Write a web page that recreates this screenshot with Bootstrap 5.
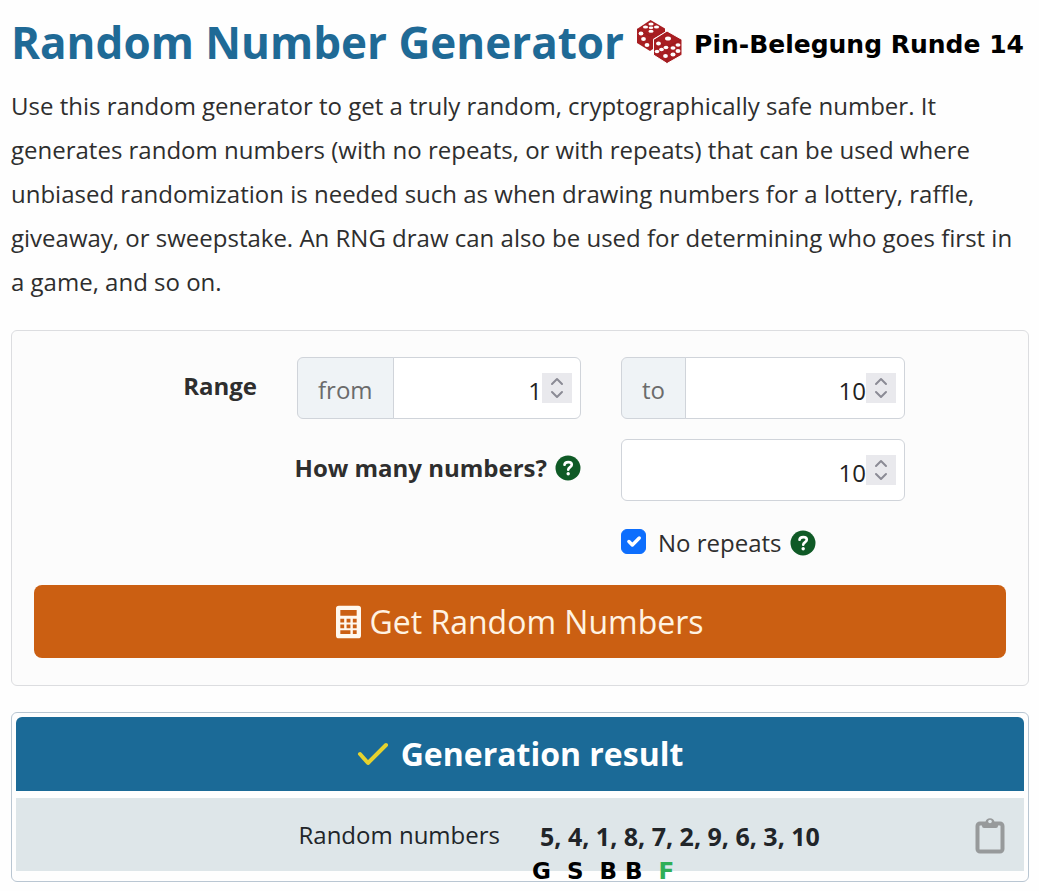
<!DOCTYPE html>
<html lang="en">
<head>
<meta charset="utf-8">
<meta name="viewport" content="width=device-width, initial-scale=1">
<title>Random Number Generator</title>
<link href="https://cdn.jsdelivr.net/npm/bootstrap@5.3.0/dist/css/bootstrap.min.css" rel="stylesheet">
<style>
  body { font-family: "Open Sans", "Noto Sans", sans-serif; font-size: 24px; line-height: 36px; color: #2e2e2e; background: #fefefe; }
  .page { padding: 9px 10px 8px 11px; }
  .title-bar { gap: 12px; }
  .title { font-size: 44px; line-height: 66px; font-weight: 700; color: #1f6a96; }
  .dice { width: 46px; height: 44px; }
  .note { font-family: "DejaVu Sans", sans-serif; font-weight: 700; color: #000; }
  .round-note { font-size: 25px; line-height: 36px; padding-top: 6px; }
  .intro { line-height: 44px; margin-bottom: 26px; padding-top: 9px; }
  .panel { background: #fcfcfc; border: 1px solid #dcdde0; border-radius: 6px; padding: 26px 22px 27px; }
  .fields { --bs-gutter-x: 40px; --bs-gutter-y: 20px; }
  .field-label { font-weight: 700; line-height: 58px; }
  .input-group-text, .form-control { font-size: 24px; line-height: 36px; height: 62px; border-color: #d0d4da; border-radius: 6px; }
  .input-group-text { background: #eff3f6; color: #6b6b6b; padding: 4px 20px 0; }
  .form-control { text-align: right; padding: 4px 8px 0 12px; color: #222; }
  .form-control::-webkit-inner-spin-button {
    -webkit-appearance: none; appearance: none; opacity: 1; width: 30px; height: 30px; margin: 0 0 4px;
    background: #e9e9ed url("data:image/svg+xml,%3Csvg xmlns='http://www.w3.org/2000/svg' viewBox='0 0 30 30' fill='none' stroke='%238b8b95' stroke-width='2' stroke-linecap='round' stroke-linejoin='round'%3E%3Cpath d='M10 11l5-5 5 5M10 19l5 5 5-5'/%3E%3C/svg%3E") center / 30px 30px;
  }
  .help { width: 26px; height: 26px; border: 0; padding: 0; background: none; line-height: 0; }
  .form-check-input { width: 25px; height: 25px; border-radius: 6px; margin: 0 0 4px; float: none; }
  .repeat-line { padding-top: 4px; margin-bottom: 24px; }
  .btn-generate { background: #cb5f12; color: #fff3e2; font-size: 32px; line-height: 48px; height: 73px; border: 0; border-radius: 8px; }
  .btn-generate:hover { background: #b4540f; color: #fff; }
  .result-box { margin-top: 26px; border: 1px solid #b9c6d2; border-radius: 6px; padding: 4px 4px 10px; }
  .result-head { background: #1b6a97; color: #fff; font-size: 32px; font-weight: 700; line-height: 74px; border-radius: 6px 6px 0 0; margin-bottom: 7px; }
  .result-row { background: #dee6e9; height: 73px; --bs-gutter-x: 40px; color: #212529; }
  .drawn { font-size: 25px; font-weight: 700; padding-top: 2px; }
  .copy-btn { border: 0; padding: 0; background: none; width: 30px; height: 38px; line-height: 0; right: 19px; top: 19px; }
  .pin-notes { left: calc(50% + 12px); top: 58px; font-size: 23px; line-height: 30px; gap: 16px; }
  .pin-free { color: #2fae57; }
</style>
</head>
<body>
<main class="page container-fluid">
  <header class="title-bar d-flex align-items-center">
    <h1 class="title mb-0 text-nowrap">Random Number Generator</h1>
    <svg class="dice flex-shrink-0" viewBox="0 0 46 44" aria-hidden="true">
      <path d="M14.500 0 29 8.500V12L17 19V29L14 31 1 23V9z" fill="#a81e22"/>
      <path d="M31 11 46 19.500V35L31 43.500 17.500 35V19.500z" fill="#a81e22" stroke="#fff" stroke-width="1"/>
      <path d="M1 9l13 7 4-2M18 20l13 7 14-7M31 27v16" fill="none" stroke="#8d171b" stroke-width=".6"/>
      <g fill="#fff">
        <ellipse cx="15" cy="4" rx="2.600" ry="1.500"/><ellipse cx="9.500" cy="7" rx="2.600" ry="1.500"/><ellipse cx="15" cy="7.700" rx="2.300" ry="1.300"/><ellipse cx="20.500" cy="7" rx="2.600" ry="1.500"/><ellipse cx="15" cy="11.300" rx="2.600" ry="1.500"/>
        <ellipse cx="5" cy="13.500" rx="2.400" ry="2"/><ellipse cx="7.500" cy="19" rx="2.400" ry="2"/><ellipse cx="11" cy="25" rx="2.400" ry="2"/>
        <ellipse cx="32" cy="18.500" rx="3" ry="2"/>
        <ellipse cx="22.500" cy="23.500" rx="2.400" ry="2"/><ellipse cx="30" cy="27.500" rx="2.400" ry="1.800"/><ellipse cx="25.500" cy="29.500" rx="2.400" ry="1.800"/><ellipse cx="21" cy="31.500" rx="2.300" ry="1.800"/><ellipse cx="29.500" cy="36" rx="2.400" ry="2"/>
        <ellipse cx="37" cy="28" rx="2.500" ry="1.800"/><ellipse cx="42" cy="25" rx="2.500" ry="1.800"/><ellipse cx="37" cy="34.500" rx="2.500" ry="2"/><ellipse cx="42" cy="31" rx="2.500" ry="2"/>
      </g>
    </svg>
    <span class="note round-note text-nowrap">Pin-Belegung Runde 14</span>
  </header>

  <p class="intro">Use this random generator to get a truly random, cryptographically safe number. It generates random numbers (with no repeats, or with repeats) that can be used where unbiased randomization is needed such as when drawing numbers for a lottery, raffle, giveaway, or sweepstake. An RNG draw can also be used for determining who goes first in a game, and so on.</p>

  <form class="panel">
    <div class="row mx-0 mt-0 fields">
      <label class="col-3 mt-0 text-end field-label" for="from">Range</label>
      <div class="col-4 mt-0">
        <div class="input-group flex-nowrap">
          <label class="input-group-text" for="from">from</label>
          <input class="form-control" type="number" id="from" value="1">
        </div>
      </div>
      <div class="col-4 mt-0">
        <div class="input-group flex-nowrap">
          <label class="input-group-text" for="to">to</label>
          <input class="form-control" type="number" id="to" value="10">
        </div>
      </div>
      <div class="col-7 d-flex justify-content-end align-items-start">
        <label class="field-label text-nowrap" for="count">How many numbers?</label>
        <button class="help ms-2 mt-3" type="button" aria-label="Help on how many numbers"><svg width="26" height="26" viewBox="0 0 26 26"><circle cx="13" cy="13" r="12.500" fill="#0f5a26"/><path d="M9.500 9.800c.3-3.600 7.300-3.600 7.300 0 0 2.300-3.600 2.300-3.600 5" fill="none" stroke="#fff" stroke-width="2.600" stroke-linecap="round"/><circle cx="13.200" cy="18.800" r="1.700" fill="#fff"/></svg></button>
      </div>
      <div class="col-4"><input class="form-control" type="number" id="count" value="10"></div>
      <div class="col-5 offset-7 d-flex align-items-center repeat-line">
        <input class="form-check-input" type="checkbox" id="norepeat" checked>
        <label class="text-nowrap mx-2 ps-1" for="norepeat">No repeats</label>
        <button class="help" type="button" aria-label="Help on no repeats"><svg width="26" height="26" viewBox="0 0 26 26"><circle cx="13" cy="13" r="12.500" fill="#0f5a26"/><path d="M9.500 9.800c.3-3.600 7.300-3.600 7.300 0 0 2.300-3.600 2.300-3.600 5" fill="none" stroke="#fff" stroke-width="2.600" stroke-linecap="round"/><circle cx="13.200" cy="18.800" r="1.700" fill="#fff"/></svg></button>
      </div>
    </div>
    <button class="btn btn-generate w-100 d-flex align-items-center justify-content-center gap-2" type="button">
      <svg width="25" height="34" viewBox="0 0 26 34" aria-hidden="true"><path fill="#fff8ee" fill-rule="evenodd" d="M3 0H23Q26 0 26 3V31Q26 34 23 34H3Q0 34 0 31V3Q0 0 3 0ZM4.500 4.500V10.500H21.500V4.500ZM4.500 13.500v4h4v-4ZM11 13.500v4h4v-4ZM17.500 13.500v4h4v-4ZM4.500 19.500v4h4v-4ZM11 19.500v4h4v-4ZM17.500 19.500v4h4v-4ZM4.500 25.500v4H15v-4ZM17.500 25.500v4h4v-4Z"/></svg>
      <span>Get Random Numbers</span>
    </button>
  </form>

  <section class="result-box">
    <h2 class="result-head d-flex align-items-center justify-content-center">
      <svg class="me-2" width="32" height="26" viewBox="0 0 32 26" aria-hidden="true"><path d="M3 13l8 9L29 4" fill="none" stroke="#e6d22e" stroke-width="4" stroke-linecap="round" stroke-linejoin="round"/></svg>
      <span class="ms-1">Generation result</span>
    </h2>
    <div class="row mx-0 align-items-center position-relative result-row">
      <div class="col-6 text-end">Random numbers</div>
      <div class="col-6 drawn">5, 4, 1, 8, 7, 2, 9, 6, 3, 10</div>
      <button class="copy-btn position-absolute" type="button" aria-label="Copy the numbers"><svg width="30" height="38" viewBox="0 0 30 38"><rect x="2.500" y="6.500" width="25" height="28" rx="2.500" fill="none" stroke="#979a9b" stroke-width="4"/><path d="M7 5h3.500a4.600 4.600 0 0 1 9 0H23v4q0 2-2 2H9q-2 0-2-2z" fill="#979a9b"/><circle cx="15" cy="4.500" r="1.800" fill="#dee6e9"/></svg></button>
      <div class="position-absolute d-flex p-0 w-auto note pin-notes"><span>G</span><span>S</span><span class="d-flex gap-2"><span>B</span><span>B</span></span><span class="pin-free">F</span></div>
    </div>
  </section>
</main>
<script src="https://cdn.jsdelivr.net/npm/bootstrap@5.3.0/dist/js/bootstrap.bundle.min.js"></script>
</body>
</html>
